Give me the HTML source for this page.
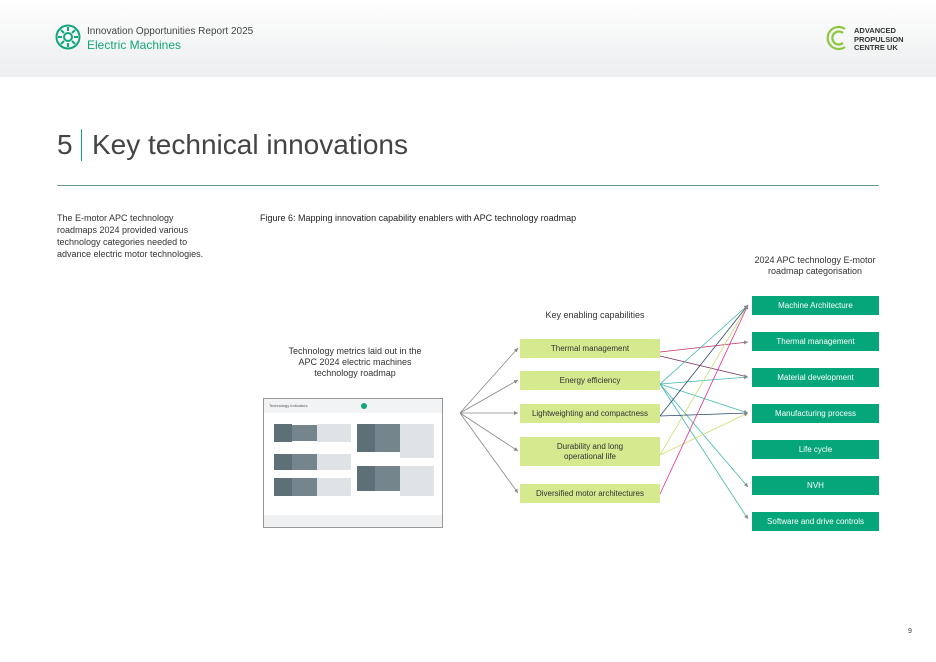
<!DOCTYPE html>
<html><head><meta charset="utf-8"><style>
body{margin:0;width:936px;height:662px;position:relative;background:#fff;font-family:"Liberation Sans",sans-serif;overflow:hidden;color:#333}
.hdr{position:absolute;left:0;top:0;width:936px;height:77px;background:linear-gradient(#fff,#eceeef)}
.a{position:absolute}
.lb{position:absolute;left:520px;width:140px;background:#d5e98f;font-size:8px;color:#333;display:flex;align-items:center;justify-content:center;text-align:center;line-height:10px}
.rb{position:absolute;left:752px;width:127px;height:19px;background:#05a67a;color:#fff;font-size:8px;display:flex;align-items:center;justify-content:center}
.g{position:absolute;background:#5d7078}
.c{position:absolute;background:#dfe3e5}
</style></head><body>
<div class="hdr"></div>
<svg class="a" style="left:55px;top:24px" width="26" height="26" viewBox="0 0 26 26"><circle cx="13" cy="13" r="11.5" fill="none" stroke="#13a57c" stroke-width="2"/><circle cx="13" cy="13" r="4" fill="none" stroke="#13a57c" stroke-width="2"/><g stroke="#13a57c" stroke-width="2"><line x1="13" y1="3" x2="13" y2="7"/><line x1="13" y1="19" x2="13" y2="23"/><line x1="3" y1="13" x2="7" y2="13"/><line x1="19" y1="13" x2="23" y2="13"/><line x1="6" y1="6" x2="9" y2="9"/><line x1="17" y1="17" x2="20" y2="20"/><line x1="20" y1="6" x2="17" y2="9"/><line x1="6" y1="20" x2="9" y2="17"/></g></svg>
<div class="a" style="left:87px;top:26px;font-size:10px;color:#444">Innovation Opportunities Report 2025</div>
<div class="a" style="left:87px;top:38px;font-size:12px;color:#13a57c">Electric Machines</div>
<svg class="a" style="left:825px;top:25px" width="26" height="26" viewBox="0 0 26 26"><g fill="none" stroke="#8cc63f" stroke-width="2.2"><path d="M20 4A11 11 0 1 0 20 22"/><path d="M18 8A6.5 6.5 0 1 0 18 18"/></g></svg>
<div class="a" style="left:854px;top:27px;font-size:7.5px;line-height:8.5px;color:#333;font-weight:bold">ADVANCED<br>PROPULSION<br>CENTRE UK</div>
<div class="a" style="left:57px;top:129px;font-size:28px;color:#444">5</div>
<div class="a" style="left:81px;top:129px;width:1px;height:32px;background:#13a57c"></div>
<div class="a" style="left:92px;top:129px;font-size:28px;color:#444">Key technical innovations</div>
<div class="a" style="left:57px;top:185px;width:822px;height:1px;background:#6a9a8a"></div>
<div class="a" style="left:57px;top:212px;font-size:9px;line-height:12px;width:150px;color:#333">The E-motor APC technology roadmaps 2024 provided various technology categories needed to advance electric motor technologies.</div>
<div class="a" style="left:260px;top:213px;font-size:9px;color:#222">Figure 6: Mapping innovation capability enablers with APC technology roadmap</div>
<div class="a" style="left:745px;top:255px;width:140px;text-align:center;font-size:9px;line-height:11px">2024 APC technology E-motor roadmap categorisation</div>
<div class="a" style="left:520px;top:310px;width:150px;text-align:center;font-size:9px">Key enabling capabilities</div>
<div class="a" style="left:280px;top:346px;width:150px;text-align:center;font-size:9px;line-height:11px">Technology metrics laid out in the APC 2024 electric machines technology roadmap</div>
<div class="a" style="left:263px;top:398px;width:178px;height:128px;border:1px solid #999;background:#fff">
<div class="a" style="left:0;top:0;width:178px;height:14px;background:#f1f3f4"></div>
<div class="a" style="left:5px;top:4px;font-size:4px;color:#555">Technology indicators</div>
<div class="a" style="left:97px;top:4px;width:6px;height:6px;border-radius:50%;background:#13a57c"></div>
<div class="g" style="left:10px;top:25px;width:18px;height:18px"></div><div class="g" style="left:28px;top:26px;width:25px;height:16px;opacity:.85"></div>
<div class="c" style="left:53px;top:25px;width:34px;height:18px"></div>
<div class="g" style="left:10px;top:55px;width:18px;height:16px"></div><div class="g" style="left:28px;top:55px;width:25px;height:16px;opacity:.85"></div>
<div class="c" style="left:53px;top:55px;width:34px;height:16px"></div>
<div class="g" style="left:10px;top:79px;width:18px;height:18px"></div><div class="g" style="left:28px;top:79px;width:25px;height:18px;opacity:.85"></div>
<div class="c" style="left:53px;top:79px;width:34px;height:18px"></div>
<div class="g" style="left:93px;top:25px;width:18px;height:28px"></div><div class="g" style="left:111px;top:25px;width:25px;height:28px;opacity:.85"></div>
<div class="c" style="left:136px;top:25px;width:34px;height:34px"></div>
<div class="g" style="left:93px;top:67px;width:18px;height:25px"></div><div class="g" style="left:111px;top:67px;width:25px;height:25px;opacity:.85"></div>
<div class="c" style="left:136px;top:67px;width:34px;height:30px"></div>
<div class="a" style="left:0;top:116px;width:178px;height:12px;background:#eef0f1"></div>
</div>
<svg class="a" style="left:0;top:0" width="936" height="662" viewBox="0 0 936 662" fill="none" stroke-width="0.8">
<defs><marker id="m" viewBox="0 0 6 6" refX="6" refY="3" markerWidth="5" markerHeight="5" orient="auto"><path d="M0 0L6 3L0 6Z" fill="#888"/></marker></defs>
<g stroke="#888" marker-end="url(#m)"><line x1="460" y1="413" x2="518" y2="348"/><line x1="460" y1="413" x2="518" y2="380"/><line x1="460" y1="413" x2="518" y2="413"/><line x1="460" y1="413" x2="518" y2="451"/><line x1="460" y1="413" x2="518" y2="493"/></g>
<g marker-end="url(#m)">
<line x1="660" y1="352" x2="748" y2="342" stroke="#c0306a"/>
<line x1="660" y1="356" x2="748" y2="377" stroke="#7a3060"/>
<g stroke="#3fb8b0"><line x1="660" y1="384" x2="748" y2="305"/><line x1="660" y1="384" x2="748" y2="377"/><line x1="660" y1="384" x2="748" y2="413"/><line x1="660" y1="384" x2="748" y2="487"/><line x1="660" y1="384" x2="748" y2="519"/></g>
<g stroke="#2a4a70"><line x1="660" y1="416" x2="748" y2="305"/><line x1="660" y1="416" x2="748" y2="413"/></g>
<g stroke="#c8e070"><line x1="660" y1="455" x2="748" y2="305"/><line x1="660" y1="455" x2="748" y2="413"/></g>
<line x1="660" y1="494" x2="748" y2="305" stroke="#e0308a"/>
</g>
</svg>
<div class="lb" style="top:339px;height:19px">Thermal management</div>
<div class="lb" style="top:371px;height:19px">Energy efficiency</div>
<div class="lb" style="top:404px;height:19px">Lightweighting and compactness</div>
<div class="lb" style="top:437px;height:29px">Durability and long<br>operational life</div>
<div class="lb" style="top:484px;height:19px">Diversified motor architectures</div>
<div class="rb" style="top:296px">Machine Architecture</div>
<div class="rb" style="top:332px">Thermal management</div>
<div class="rb" style="top:368px">Material development</div>
<div class="rb" style="top:404px">Manufacturing process</div>
<div class="rb" style="top:440px">Life cycle</div>
<div class="rb" style="top:476px">NVH</div>
<div class="rb" style="top:512px">Software and drive controls</div>
<div class="a" style="left:908px;top:628px;font-size:7px">9</div>
</body></html>
